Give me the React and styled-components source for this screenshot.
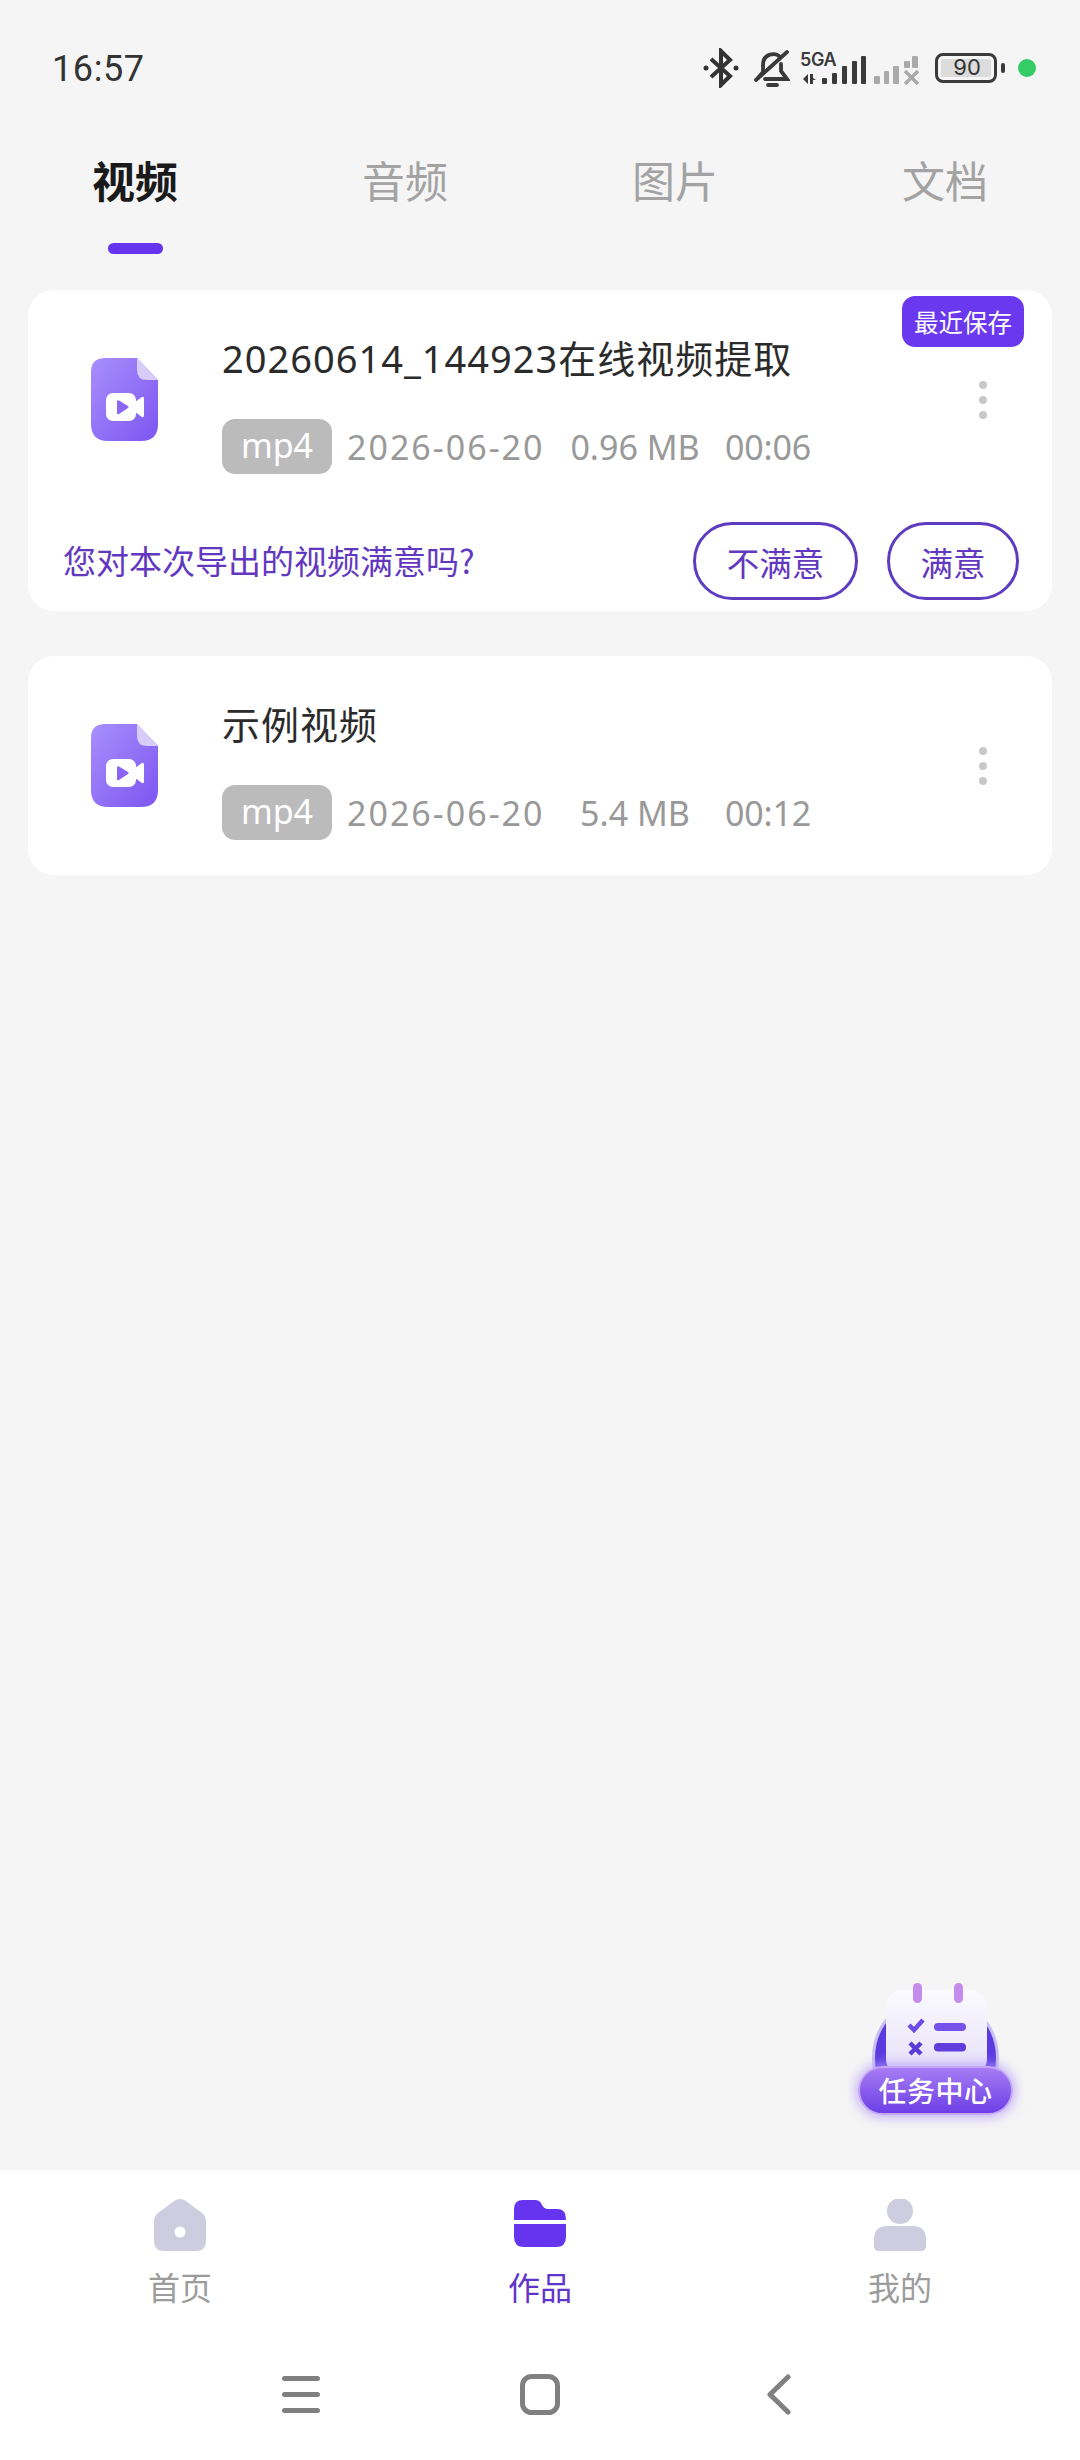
import React from "react";
import styled, { createGlobalStyle } from "styled-components";

const cjk = `"Noto Sans CJK SC", sans-serif`;
const latin = `"Noto Sans", "Noto Sans CJK SC", sans-serif`;

const Global = createGlobalStyle`
  html, body { margin: 0; padding: 0; background: #f5f5f5; }
  * { box-sizing: border-box; }
`;

const Page = styled.div`
  width: 1080px;
  height: 2460px;
  display: flex;
  flex-direction: column;
  background: #f5f5f5;
  font-family: ${latin};
  overflow: hidden;
`;

const StatusBar = styled.div`
  height: 136px;
  flex: none;
  display: flex;
  align-items: center;
  justify-content: space-between;
  padding: 0 44px 0 52px;
`;

const Clock = styled.div`
  font-family: Roboto, sans-serif;
  font-weight: 400;
  font-size: 36px;
  line-height: 40px;
  margin-top: 2px;
  letter-spacing: 0.6px;
  color: #333;
`;

const StatusIcons = styled.div`
  display: flex;
  align-items: center;
`;

const Signal = styled.div`
  position: relative;
  width: 66px;
  height: 34px;
  margin-left: 10px;
  svg { display: block; }
`;

const NetLabel = styled.span`
  position: absolute;
  left: 0;
  top: 0;
  font-family: Inter, sans-serif;
  font-weight: 600;
  font-size: 18px;
  line-height: 17px;
  letter-spacing: -0.4px;
  color: #3a3a3a;
`;

const Battery = styled.div`
  position: relative;
  width: 62px;
  height: 30px;
  margin-left: 16px;
  border: 3.5px solid #3a3a3a;
  border-radius: 8px;
  padding: 3px;
  display: flex;
  &::after {
    content: "";
    position: absolute;
    right: -11px;
    top: 7px;
    width: 4px;
    height: 10px;
    border-radius: 2px;
    background: #3a3a3a;
  }
`;

const BatteryFill = styled.div`
  flex: 1;
  background: #dcdcdc;
  border-radius: 2px;
  font-family: Inter, sans-serif;
  font-size: 22px;
  line-height: 17px;
  color: #333;
  text-align: center;
  padding-left: 2px;
`;

const GreenDot = styled.div`
  width: 18px;
  height: 18px;
  margin-left: 21px;
  border-radius: 50%;
  background: #33cc66;
`;

const Tabs = styled.div`
  flex: none;
  display: grid;
  grid-template-columns: repeat(4, 270px);
`;

const Tab = styled.div`
  display: flex;
  flex-direction: column;
  align-items: center;
`;

const TabLabel = styled.div`
  font-family: ${cjk};
  font-size: 43px;
  line-height: 86px;
  font-weight: ${(p) => (p.$active ? 700 : 400)};
  color: ${(p) => (p.$active ? "#1a1a1a" : "#a3a3a3")};
`;

const TabMark = styled.div`
  width: 55px;
  height: 11px;
  margin-top: 21px;
  border-radius: 6px;
  background: ${(p) => (p.$active ? "#6633ee" : "transparent")};
`;

const Main = styled.div`
  position: relative;
  flex: 1;
  display: flex;
  flex-direction: column;
  gap: 45px;
  padding: 36px 28px 0;
`;

const Card = styled.div`
  position: relative;
  background: #fff;
  border-radius: 26px;
`;

const SavedBadge = styled.div`
  position: absolute;
  top: 6px;
  right: 28px;
  width: 122px;
  height: 51px;
  border-radius: 13px;
  background: #6a38ef;
  color: #fff;
  font-family: ${cjk};
  font-size: 24.5px;
  line-height: 51px;
  text-align: center;
`;

const CardBody = styled.div`
  height: 219px;
  display: flex;
  align-items: center;
  padding: 0 65px 0 63px;
`;

const FileIcon = styled.svg`
  flex: none;
  width: 67px;
  height: 83px;
  margin-right: 64px;
`;

const Info = styled.div`
  flex: 1;
  display: flex;
  flex-direction: column;
  gap: 39px;
  margin-top: 11px;
`;

const Title = styled.div`
  font-size: 38px;
  line-height: 44px;
  letter-spacing: 1px;
  color: #2b2b2b;
  white-space: nowrap;
  font-family: ${latin};
`;

const Meta = styled.div`
  display: flex;
  align-items: center;
  height: 55px;
  font-size: 34px;
  color: #999;
  white-space: nowrap;
`;

const TypeBadge = styled.div`
  width: 110px;
  height: 55px;
  margin-right: 15px;
  border-radius: 13px;
  background: #bbb;
  color: #fff;
  font-size: 34px;
  line-height: 53px;
  text-align: center;
`;

const DateText = styled.span`
  width: 196px;
  letter-spacing: 2px;
`;

const SizeText = styled.span`
  width: 182px;
  padding-left: 2px;
  text-align: center;
`;

const TimeText = styled.span`
  letter-spacing: -0.2px;
`;

const Dots = styled.div`
  flex: none;
  display: flex;
  flex-direction: column;
  gap: 7px;
`;

const Dot = styled.div`
  width: 8px;
  height: 8px;
  border-radius: 50%;
  background: #c8c8c8;
`;

const Feedback = styled.div`
  display: flex;
  align-items: center;
  padding: 13px 33px 11px 35px;
`;

const Question = styled.div`
  flex: 1;
  margin-bottom: 2px;
  font-family: ${cjk};
  font-size: 33px;
  color: #6238c0;
`;

const Rate = styled.button`
  width: ${(p) => p.$w}px;
  height: 78px;
  margin-left: 29px;
  padding: 0;
  border: 3px solid #5d3cc0;
  border-radius: 39px;
  background: #fff;
  font-family: ${cjk};
  font-size: 32.5px;
  color: #6238c0;
`;

const TaskWidget = styled.div`
  position: absolute;
  right: 67px;
  bottom: 55px;
  width: 155px;
  height: 135px;
  display: flex;
  align-items: flex-end;
  svg { position: absolute; left: 0; top: 0; }
`;

const TaskPill = styled.div`
  position: relative;
  width: 155px;
  height: 49px;
  border-radius: 25px;
  border: 2px solid #c4a6f6;
  background: linear-gradient(180deg, #a77cf3 0%, #6b3fe6 100%);
  box-shadow: 0 0 11px 3px rgba(180, 155, 248, 0.7);
  color: #fff;
  font-family: ${cjk};
  font-weight: 500;
  font-size: 28px;
  letter-spacing: 0.5px;
  line-height: 44px;
  text-align: center;
`;

const BottomNav = styled.div`
  flex: none;
  height: 290px;
  background: #fff;
  display: flex;
  flex-direction: column;
`;

const NavRow = styled.div`
  display: grid;
  grid-template-columns: repeat(3, 360px);
  padding-top: 29px;
`;

const NavItem = styled.div`
  display: flex;
  flex-direction: column;
  align-items: center;
`;

const NavIcon = styled.svg`
  display: block;
  width: 52px;
  height: 52px;
`;

const NavLabel = styled.div`
  margin-top: 15px;
  font-family: ${cjk};
  font-size: 32px;
  line-height: 40px;
  color: ${(p) => (p.$active ? "#6035c8" : "#9c9c9c")};
`;

const SystemRow = styled.div`
  display: flex;
  justify-content: center;
  margin-top: 68px;
`;

const SystemSlot = styled.div`
  width: 239px;
  display: flex;
  justify-content: center;
`;

function VideoFileIcon({ id }) {
  return (
    <FileIcon viewBox="0 0 67 83">
      <defs>
        <linearGradient id={id} x1="0" y1="0" x2="1" y2="1">
          <stop offset="0" stopColor="#a98ffc" />
          <stop offset="1" stopColor="#7c55f1" />
        </linearGradient>
      </defs>
      <path d="M14 0H46L67 22V66Q67 83 50 83H17Q0 83 0 66V14Q0 0 14 0Z" fill={`url(#${id})`} />
      <path d="M46 0L67 22H56Q46 22 46 12Z" fill="#d8ccfa" />
      <rect x="15" y="35" width="30" height="28" rx="7" fill="#fff" />
      <path d="M44 44L51 39Q53 38 53 41V57Q53 60 51 59L44 54Z" fill="#fff" />
      <path d="M26 43.5Q26 41.5 28 42.5L37 48Q38.5 49 37 50L28 56Q26 57 26 55Z" fill="#8b66f5" />
    </FileIcon>
  );
}

function VideoCard({ title, size, time, saved, feedback }) {
  return (
    <Card>
      {saved && <SavedBadge>最近保存</SavedBadge>}
      <CardBody>
        <VideoFileIcon id={`file-${time.replace(":", "")}`} />
        <Info>
          <Title>{title}</Title>
          <Meta>
            <TypeBadge>mp4</TypeBadge>
            <DateText>2026-06-20</DateText>
            <SizeText>{size}</SizeText>
            <TimeText>{time}</TimeText>
          </Meta>
        </Info>
        <Dots>
          <Dot />
          <Dot />
          <Dot />
        </Dots>
      </CardBody>
      {feedback && (
        <Feedback>
          <Question>您对本次导出的视频满意吗?</Question>
          <Rate $w={165}>不满意</Rate>
          <Rate $w={132}>满意</Rate>
        </Feedback>
      )}
    </Card>
  );
}

const tabs = ["视频", "音频", "图片", "文档"];

export default function App() {
  return (
    <Page>
      <Global />
      <StatusBar>
        <Clock>16:57</Clock>
        <StatusIcons>
          <svg width="36" height="40" viewBox="0 0 36 40" fill="none" stroke="#333" strokeWidth="4">
            <path d="M8 11L27 28L18 37V3L27 12L8 29" />
            <circle cx="3" cy="20" r="2.5" fill="#333" stroke="none" />
            <circle cx="33" cy="20" r="2.5" fill="#333" stroke="none" />
          </svg>
          <svg width="36" height="38" viewBox="0 0 36 38" fill="none" stroke="#3a3a3a" strokeWidth="3.8" strokeLinecap="round" style={{ marginLeft: 15 }}>
            <path d="M2 31L33 3" />
            <path d="M26 8C22 3 9 4 9 16V23L4 29" />
            <path d="M27 15V22L33 30H11" />
            <path d="M14 36H23" />
          </svg>
          <Signal>
            <svg width="66" height="34" viewBox="0 0 66 34" fill="#3a3a3a">
              <path d="M3 28L8 23V33ZM10 23H13V27L16 29H13V33H10Z" />
              <rect x="22" y="27" width="5" height="6" rx="1" />
              <rect x="32" y="22" width="5" height="11" rx="1" />
              <rect x="42" y="15" width="5" height="18" rx="1" />
              <rect x="52" y="10" width="5" height="23" rx="1" />
              <rect x="61" y="5" width="5" height="28" rx="1" />
            </svg>
            <NetLabel>5GA</NetLabel>
          </Signal>
          <svg width="45" height="30" viewBox="0 0 45 30" fill="#aaa" style={{ marginLeft: 8, marginTop: 4 }}>
            <rect x="0" y="21" width="6" height="8" rx="1" />
            <rect x="10" y="16" width="5" height="13" rx="1" />
            <rect x="19" y="11" width="6" height="18" rx="1" />
            <rect x="30" y="6" width="6" height="7" rx="1" />
            <rect x="38" y="1" width="6" height="12" rx="1" />
            <path d="M31 16L44 29M44 16L31 29" stroke="#aaa" strokeWidth="3.5" />
          </svg>
          <Battery>
            <BatteryFill>90</BatteryFill>
          </Battery>
          <GreenDot />
        </StatusIcons>
      </StatusBar>

      <Tabs>
        {tabs.map((t, i) => (
          <Tab key={t}>
            <TabLabel $active={i === 0}>{t}</TabLabel>
            <TabMark $active={i === 0} />
          </Tab>
        ))}
      </Tabs>

      <Main>
        <VideoCard title="20260614_144923在线视频提取" size="0.96 MB" time="00:06" saved feedback />
        <VideoCard title="示例视频" size="5.4 MB" time="00:12" />
        <TaskWidget>
          <svg width="155" height="135" viewBox="0 0 155 135">
            <defs>
              <linearGradient id="sheet" x1="0" y1="0" x2="0" y2="1">
                <stop offset="0" stopColor="#fbfaff" />
                <stop offset="1" stopColor="#e6e0fa" />
              </linearGradient>
            </defs>
            <circle cx="77.5" cy="78" r="62" fill="#5b3be0" stroke="#c8c0f5" strokeWidth="3" />
            <rect x="28" y="10" width="101" height="85" rx="16" fill="url(#sheet)" />
            <rect x="55" y="3" width="9" height="20" rx="4.5" fill="#c58cec" />
            <rect x="96" y="3" width="9" height="20" rx="4.5" fill="#c58cec" />
            <path d="M51 45L56 50L65 40" fill="none" stroke="#6d4be6" strokeWidth="4.5" />
            <path d="M52 63L63 74M63 63L52 74" fill="none" stroke="#5a3ad8" strokeWidth="4.5" />
            <rect x="76" y="43" width="32" height="8" rx="4" fill="#7552ea" />
            <rect x="76" y="63" width="32" height="8.5" rx="4" fill="#5f3edc" />
          </svg>
          <TaskPill>任务中心</TaskPill>
        </TaskWidget>
      </Main>

      <BottomNav>
        <NavRow>
          <NavItem>
            <NavIcon viewBox="0 0 52 52">
              <path
                fillRule="evenodd"
                d="M20 2Q26 -2 32 2L48 14Q52 17 52 22V42Q52 52 42 52H10Q0 52 0 42V22Q0 17 4 14ZM26 27.5A5.5 5.5 0 1 0 26 38.5A5.5 5.5 0 1 0 26 27.5Z"
                fill="#cdcddf"
              />
            </NavIcon>
            <NavLabel>首页</NavLabel>
          </NavItem>
          <NavItem>
            <NavIcon viewBox="0 0 52 52">
              <path d="M0 21V10Q0 1 9 1H21Q26 1 28 6Q30 10 34 10H44Q52 10 52 21Z" fill="#6633ee" />
              <path d="M0 25H52V38Q52 48 42 48H10Q0 48 0 38Z" fill="#6633ee" />
            </NavIcon>
            <NavLabel $active>作品</NavLabel>
          </NavItem>
          <NavItem>
            <NavIcon viewBox="0 0 52 52">
              <circle cx="26" cy="12" r="13" fill="#cdcddf" />
              <path d="M0 47V40Q0 27 14 27H38Q52 27 52 40V47Q52 52 47 52H5Q0 52 0 47Z" fill="#cdcddf" />
            </NavIcon>
            <NavLabel>我的</NavLabel>
          </NavItem>
        </NavRow>
        <SystemRow>
          <SystemSlot>
            <svg width="38" height="41" viewBox="0 0 38 41" fill="#808080">
              <rect x="0" y="2" width="38" height="5" rx="2.5" />
              <rect x="0" y="18" width="38" height="5" rx="2.5" />
              <rect x="0" y="34" width="38" height="5" rx="2.5" />
            </svg>
          </SystemSlot>
          <SystemSlot>
            <svg width="40" height="41" viewBox="0 0 40 41" fill="none" stroke="#808080" strokeWidth="5">
              <rect x="2.5" y="2.5" width="35" height="36" rx="9" />
            </svg>
          </SystemSlot>
          <SystemSlot>
            <svg width="24" height="41" viewBox="0 0 24 41" fill="none" stroke="#808080" strokeWidth="5" strokeLinecap="round" strokeLinejoin="round">
              <path d="M21 3L3 20.5L21 38" />
            </svg>
          </SystemSlot>
        </SystemRow>
      </BottomNav>
    </Page>
  );
}
